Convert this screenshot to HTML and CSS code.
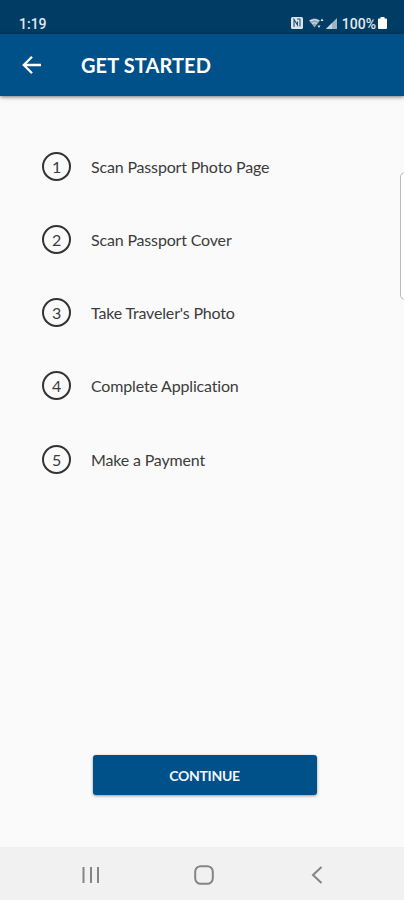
FILE: index.html
```html
<!DOCTYPE html>
<html lang="en">
<head>
    <meta charset="UTF-8">
    <meta name="viewport" content="width=device-width, initial-scale=1.0">
    <title>Get Started</title>
    <link rel="stylesheet" href="styles.css">
</head>
<body>
    <div class="status-bar">
        <span class="time">1:19</span>
        <div class="status-icons">
            <svg class="nfc" width="12" height="12" viewBox="0 0 12 12">
                <rect width="12" height="12" rx="1.5" fill="#dce5ec"/>
                <path d="M3 10V2.5L6.5 8V4.5M6 2h3v7.5" fill="none" stroke="#1f5273" stroke-width="1.1"/>
            </svg>
            <svg class="wifi" width="16" height="11" viewBox="0 0 16 11">
                <path d="M0 2.5Q5.5-1.5 11 2.5L5.5 9.5z" fill="#8fa9bb"/>
                <path d="M1 3Q5.5 0 10 3M3 5.5Q5.5 4 8 5.5" fill="none" stroke="#dce5ec"/>
                <path d="M13 0.5l1.5 2.5h-3zM10 10l1.5-2.5h-3z" fill="#dce5ec"/>
            </svg>
            <svg class="signal" width="11" height="11" viewBox="0 0 11 11">
                <path d="M0 11L11 0v11z" fill="#9eb4c3"/>
                <path d="M0 11l6-6v6z" fill="#c6d3dc"/>
            </svg>
            <span class="percent">100%</span>
            <svg class="battery" width="9" height="12" viewBox="0 0 9 12">
                <path d="M2.5 0h4v1.5H8q1 0 1 1V11q0 1-1 1H1q-1 0-1-1V2.5q0-1 1-1h1.5z" fill="#fff"/>
            </svg>
        </div>
    </div>

    <header class="app-bar">
        <svg class="back" width="20" height="20" viewBox="0 0 20 20">
            <path d="M19 10H2.5M10 1.8L1.8 10l8.2 8.2" fill="none" stroke="#fff" stroke-width="2.3"/>
        </svg>
        <h1>GET STARTED</h1>
    </header>

    <main class="content">
        <ol class="steps">
            <li><span class="number">1</span><span>Scan Passport Photo Page</span></li>
            <li><span class="number">2</span><span>Scan Passport Cover</span></li>
            <li><span class="number">3</span><span>Take Traveler's Photo</span></li>
            <li><span class="number">4</span><span>Complete Application</span></li>
            <li><span class="number">5</span><span>Make a Payment</span></li>
        </ol>
        <button type="button" class="continue">CONTINUE</button>
        <div class="edge-panel"></div>
    </main>

    <nav class="nav-bar">
        <svg width="20" height="20" viewBox="0 0 20 20">
            <path d="M2.5 2v16M10 2v16M17 2v16" stroke="#858585" stroke-width="2"/>
        </svg>
        <svg width="20" height="20" viewBox="0 0 20 20">
            <rect x="1.2" y="1.2" width="17.6" height="17.6" rx="5.5" fill="none" stroke="#858585" stroke-width="2"/>
        </svg>
        <svg width="20" height="20" viewBox="0 0 20 20">
            <path d="M14.5 2L6 10l8.5 8" fill="none" stroke="#858585" stroke-width="2"/>
        </svg>
    </nav>
</body>
</html>
```

FILE: styles.css
```css
body {
    margin: 0;
    height: 900px;
    display: flex;
    flex-direction: column;
    background-color: #fafafa;
    font-family: Lato, sans-serif;
    color: #3c3c3c;
    overflow: hidden;
}
.status-bar {
    height: 34px;
    flex-shrink: 0;
    box-sizing: border-box;
    padding: 12px 17px 0 19px;
    display: flex;
    justify-content: space-between;
    background-color: #003c63;
    color: #e3eaf0;
    font-family: Roboto, sans-serif;
    font-size: 14px;
    font-weight: 500;
    line-height: 24px;
}
.status-icons {
    display: flex;
    align-items: center;
    height: 23px;
}
.nfc {
    margin-bottom: 1px;
}
.wifi {
    margin-left: 6px;
}
.signal {
    margin-left: 1px;
}
.percent {
    margin: 0 2px 0 5px;
}
.battery {
    margin-bottom: 1px;
}
.app-bar {
    height: 62px;
    flex-shrink: 0;
    display: flex;
    align-items: center;
    padding-left: 22px;
    background-color: #00508a;
    box-shadow: 0 1px 4px rgba(0,0,0,0.55);
    z-index: 1;
}
h1 {
    margin: 0 0 0 39px;
    color: #fff;
    font-size: 20px;
    font-weight: bold;
    letter-spacing: 0.1px;
}
.content {
    flex: 1;
    position: relative;
    display: flex;
    flex-direction: column;
    align-items: center;
    justify-content: space-between;
    padding: 56px 0 52px;
}
.steps {
    align-self: stretch;
    list-style: none;
    margin: 0;
    padding: 0 0 0 42px;
    display: flex;
    flex-direction: column;
    gap: 44.15px;
}
.steps li {
    display: flex;
    align-items: center;
    gap: 20px;
    height: 29px;
    font-size: 16px;
    letter-spacing: -0.17px;
}
.number {
    width: 29px;
    height: 29px;
    box-sizing: border-box;
    border: 2px solid #333;
    border-radius: 50%;
    line-height: 25px;
    text-align: center;
}
.continue {
    width: 224px;
    height: 40px;
    margin-left: 6px;
    padding: 0 1px 0 0;
    border: none;
    border-radius: 3px;
    background-color: #00508a;
    box-shadow: 0 1px 3px rgba(0,0,0,0.4);
    color: #f2f6f9;
    font-family: Lato, sans-serif;
    font-size: 14px;
    font-weight: bold;
    letter-spacing: -0.3px;
}
.edge-panel {
    position: absolute;
    top: 76px;
    right: -8px;
    width: 10px;
    height: 126px;
    border: 1px solid #bbb;
    border-radius: 5px;
    background-color: #fff;
}
.nav-bar {
    height: 53px;
    flex-shrink: 0;
    display: flex;
    justify-content: center;
    align-items: center;
    gap: 93px;
    padding: 2px 0 0 4px;
    box-sizing: border-box;
    background-color: #f1f1f1;
}
```
